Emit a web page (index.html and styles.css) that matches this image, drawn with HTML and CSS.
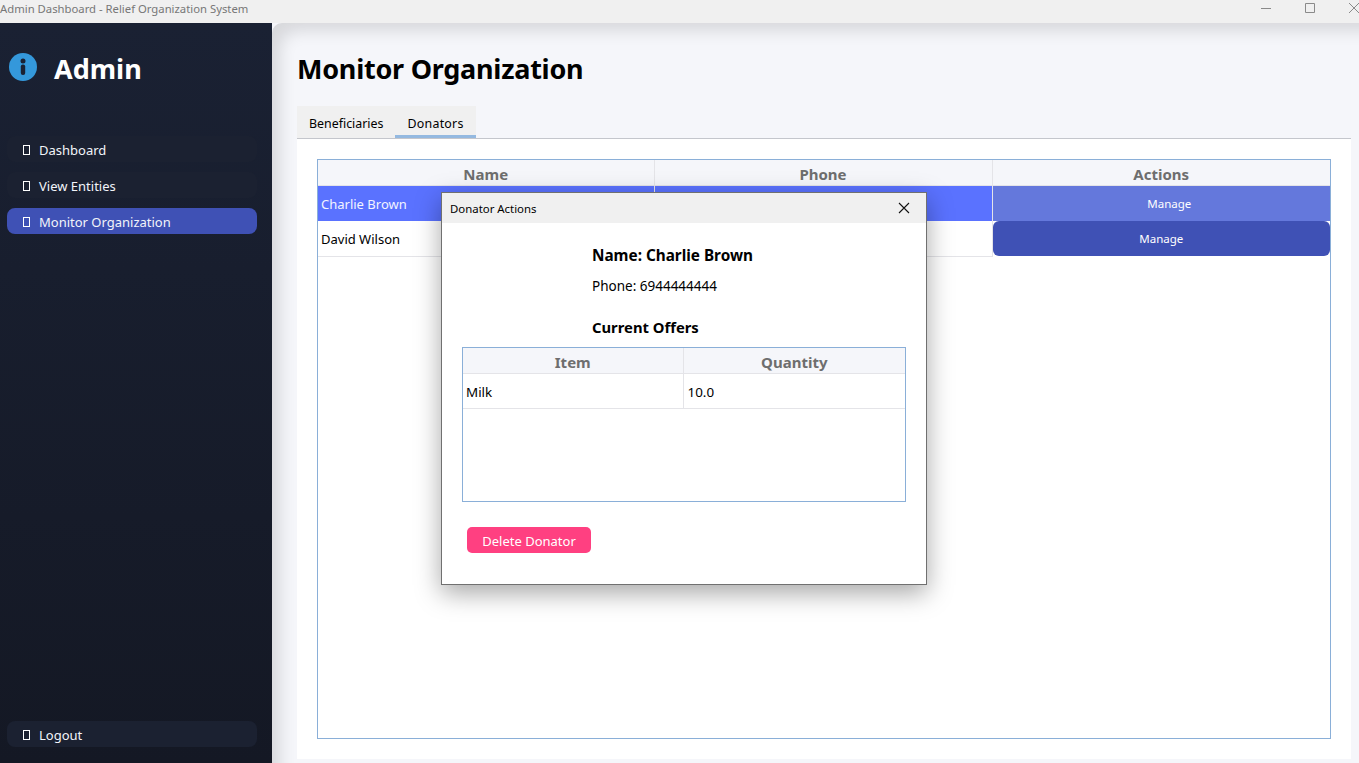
FILE: index.html
```html
<!DOCTYPE html>
<html lang="en">
<head>
  <meta charset="UTF-8">
  <title>Admin Dashboard - Relief Organization System</title>
  <link rel="stylesheet" href="styles.css">
</head>
<body>
  <header class="titlebar">
    <span class="titlebar-text">Admin Dashboard - Relief Organization System</span>
    <div class="window-controls">
      <svg width="10" height="10" viewBox="0 0 10 10"><path d="M0 5.5H10" stroke="#8a8a8a" fill="none"/></svg>
      <svg width="10" height="10" viewBox="0 0 10 10"><path d="M.5 .5H9.5V9.5H.5Z" stroke="#8a8a8a" fill="none"/></svg>
      <svg width="10" height="10" viewBox="0 0 10 10"><path d="M0 0L10 10M10 0L0 10" stroke="#8a8a8a" fill="none"/></svg>
    </div>
  </header>

  <div class="app">
    <aside class="sidebar">
      <div class="brand">
        <svg class="brand-icon" width="28" height="28" viewBox="0 0 28 28">
          <circle cx="14" cy="14" r="14" fill="#3498db"/>
          <circle cx="14" cy="8" r="2.5" fill="#1a2133"/>
          <rect x="11.8" y="11.5" width="4.4" height="10.5" rx="2" fill="#1a2133"/>
        </svg>
        <span class="brand-name">Admin</span>
      </div>
      <nav class="nav">
        <a class="nav-item"><span class="tofu"></span><span class="nav-label">Dashboard</span></a>
        <a class="nav-item"><span class="tofu"></span><span class="nav-label">View Entities</span></a>
        <a class="nav-item active"><span class="tofu"></span><span class="nav-label">Monitor Organization</span></a>
      </nav>
      <a class="nav-item logout"><span class="tofu"></span><span class="nav-label">Logout</span></a>
    </aside>

    <main class="main">
      <h1 class="page-title">Monitor Organization</h1>
      <div class="tabs">
        <div class="tab">Beneficiaries</div>
        <div class="tab selected">Donators</div>
      </div>
      <section class="panel">
        <div class="table-box">
          <table class="grid">
            <thead>
              <tr><th class="col-first">Name</th><th class="col-second">Phone</th><th>Actions</th></tr>
            </thead>
            <tbody>
              <tr class="row-selected">
                <td>Charlie Brown</td>
                <td></td>
                <td class="action-cell"><button class="manage manage-hover">Manage</button></td>
              </tr>
              <tr>
                <td>David Wilson</td>
                <td></td>
                <td class="action-cell"><button class="manage">Manage</button></td>
              </tr>
            </tbody>
          </table>
        </div>
      </section>
    </main>
  </div>

  <div class="dialog">
    <div class="dialog-title">
      <span>Donator Actions</span>
      <svg width="12" height="12" viewBox="0 0 12 12"><path d="M1 1L11 11M11 1L1 11" stroke="#111" stroke-width="1.1" fill="none"/></svg>
    </div>
    <div class="dialog-body">
      <div class="info">
        <div class="info-name">Name: Charlie Brown</div>
        <div class="info-phone">Phone: 6944444444</div>
        <div class="info-offers">Current Offers</div>
      </div>
      <div class="table-box offers-box">
        <table class="grid">
          <thead>
            <tr><th class="col-item">Item</th><th>Quantity</th></tr>
          </thead>
          <tbody>
            <tr><td>Milk</td><td class="qty">10.0</td></tr>
          </tbody>
        </table>
      </div>
      <button class="delete-btn">Delete Donator</button>
    </div>
  </div>
</body>
</html>
```

FILE: styles.css
```css
* {
  box-sizing: border-box;
}

html,
body {
  margin: 0;
  height: 100%;
  overflow: hidden;
}

body {
  display: flex;
  flex-direction: column;
  font-family: "Noto Sans", "Open Sans", sans-serif;
  color: #000;
  background-color: #f5f6fa;
}

/* window title bar */
.titlebar {
  flex: none;
  height: 23px;
  display: flex;
  justify-content: space-between;
  background-color: #f0f0f0;
}

.titlebar-text {
  font-size: 11.3px;
  line-height: 18px;
  color: #777;
}

.window-controls {
  display: flex;
  gap: 34px;
  padding-top: 3px;
}

.window-controls svg {
  display: block;
}

.app {
  flex: 1;
  display: flex;
  min-height: 0;
}

/* sidebar */
.sidebar {
  flex: none;
  width: 272px;
  display: flex;
  flex-direction: column;
  padding: 30px 15px 16px 7px;
  background: linear-gradient(#1a2133, #141824);
}

.brand {
  display: flex;
  align-items: center;
  height: 28px;
  padding-left: 2px;
}

.brand-name {
  margin-left: 17px;
  margin-top: 3px;
  font-size: 27px;
  font-weight: 700;
  color: #fff;
}

.nav {
  display: flex;
  flex-direction: column;
  gap: 10px;
  margin-top: 55px;
}

.nav-item {
  display: flex;
  align-items: center;
  height: 26px;
  padding-left: 16px;
  border-radius: 8px;
  font-size: 13px;
  color: #f2f4fa;
  background-color: #1b2131;
}

.nav-label {
  padding-top: 2px;
}

.nav-item.active {
  background-color: #3f51b5;
}

.logout {
  margin-top: auto;
}

.tofu {
  width: 7px;
  height: 10px;
  margin: 2px 9px 0 0;
  border: 1px solid #fff;
}

/* main area */
.main {
  flex: 1;
  min-width: 0;
  display: flex;
  flex-direction: column;
  padding: 26px 8px 4px 25px;
  border-top-left-radius: 10px;
  box-shadow: inset 16px 16px 16px -8px rgba(0, 0, 0, 0.12);
}

.page-title {
  margin: 0;
  height: 57px;
  font-size: 27px;
  font-weight: 700;
  line-height: 40px;
  letter-spacing: -0.25px;
}

.tabs {
  flex: none;
  display: flex;
  align-self: flex-start;
  height: 32px;
  background-color: #f0f0f0;
}

.tab {
  padding: 0 12px;
  font-size: 12.4px;
  line-height: 35px;
}

.tab.selected {
  letter-spacing: 0.25px;
  border-bottom: 3px solid #94b9e0;
}

.panel {
  flex: 1;
  min-height: 0;
  padding: 20px;
  border-top: 1px solid #c4c6cc;
  background-color: #fff;
}

.table-box {
  height: 100%;
  border: 1px solid #8aafd8;
  background-color: #fff;
}

.grid {
  width: 100%;
  table-layout: fixed;
  border-collapse: collapse;
}

.grid th {
  height: 25px;
  padding: 4px 0 0;
  font-size: 15px;
  line-height: 21px;
  font-weight: 700;
  color: #6e6e6e;
  background-color: #f5f6fa;
  border-right: 1px solid #e4e4e8;
  border-bottom: 1px solid #e4e4e8;
}

.grid .col-first {
  width: 336px;
}

.grid .col-second {
  width: 338px;
}

.grid .col-item {
  width: 220px;
}

.grid td {
  height: 35px;
  padding: 2px 3px 0;
  font-size: 13px;
  border-right: 1px solid #e4e4e8;
  border-bottom: 1px solid #e4e4e8;
}

.offers-box .grid td {
  font-size: 13.4px;
}

.offers-box .grid .qty {
  padding-left: 4px;
}

.grid th:last-child,
.grid td:last-child {
  border-right: none;
}

.row-selected td {
  padding-top: 0;
  color: #f2f4ff;
  background-color: #5a72ff;
  border-bottom: none;
}

.grid .action-cell {
  padding: 0;
  border-bottom: none;
}

.manage {
  display: block;
  width: 100%;
  height: 35px;
  padding: 0;
  border: none;
  border-radius: 6px;
  font-family: inherit;
  font-size: 11.5px;
  color: #fff;
  background-color: #3f51b5;
}

.manage-hover {
  padding-left: 16px;
  border-radius: 0;
  background-color: #6478dc;
}

/* modal dialog */
.dialog {
  position: absolute;
  left: 441px;
  top: 192px;
  width: 486px;
  height: 393px;
  border: 1px solid #707070;
  background-color: #fff;
  box-shadow: 0 8px 24px rgba(0, 0, 0, 0.35);
}

.dialog-title {
  display: flex;
  align-items: center;
  justify-content: space-between;
  height: 30px;
  padding: 0 16px 0 8px;
  font-size: 11.4px;
  background-color: #f0f0f0;
}

.dialog-body {
  padding: 0 20px;
}

.info {
  padding-left: 130px;
}

.info-name {
  padding-top: 20px;
  font-size: 15.3px;
  font-weight: 700;
  line-height: 24px;
}

.info-phone {
  padding-top: 8px;
  font-size: 13.5px;
  line-height: 22px;
}

.info-offers {
  padding-top: 19px;
  font-size: 14.8px;
  font-weight: 700;
  line-height: 22px;
}

.offers-box {
  height: 155px;
  margin-top: 9px;
}

.delete-btn {
  display: block;
  width: 124px;
  height: 26px;
  margin: 25px 0 0 5px;
  padding: 2px 0 0;
  border: none;
  border-radius: 5px;
  font-family: inherit;
  font-size: 13px;
  color: #fff;
  background-color: #ff4081;
}
```
